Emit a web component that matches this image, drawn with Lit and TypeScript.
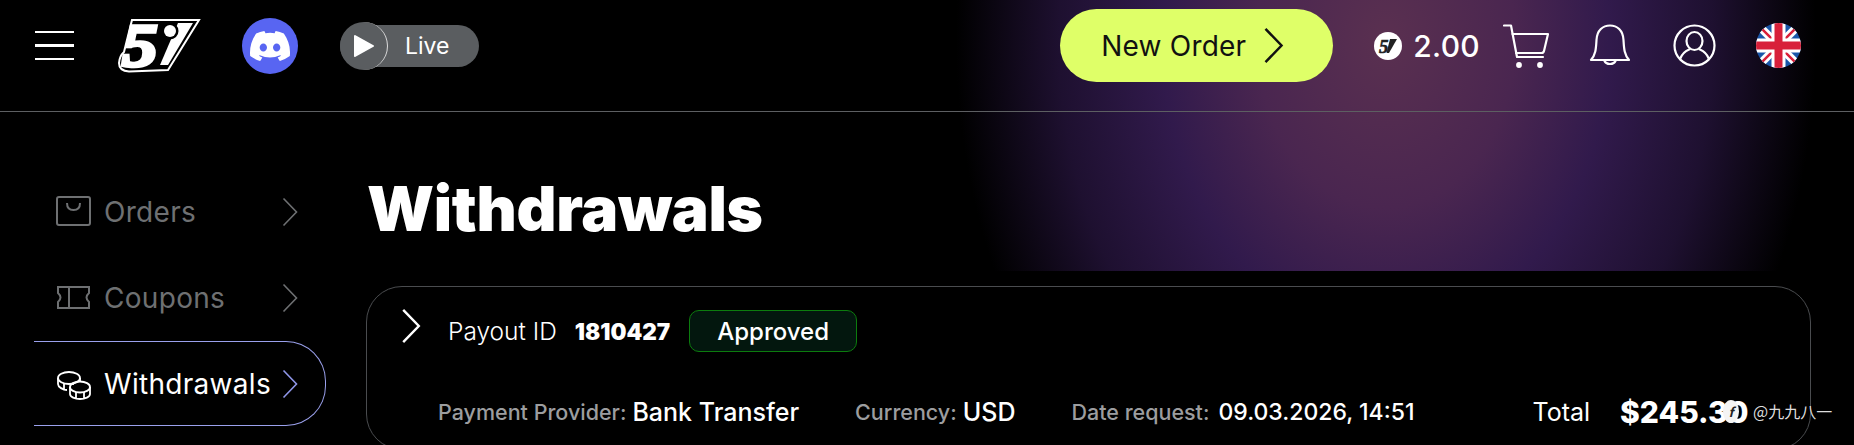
import { LitElement, html, css } from "lit";
import { customElement } from "lit/decorators.js";

const chevron = (cls: string) => html`<svg class=${cls} viewBox="0 0 16 30" fill="none" stroke="currentColor" stroke-width="2"><path d="M1.5 1.5 L14.5 15 L1.5 28.5"/></svg>`;

@customElement("app-root")
export class AppRoot extends LitElement {
  static styles = css`
    :host { display:block; position:relative; width:1854px; height:445px; overflow:hidden; background:#000; color:#fff; font-family:"Inter","Liberation Sans",sans-serif; }
    .glow { position:absolute; left:900px; top:0; width:954px; height:271px; background:radial-gradient(ellipse 430px 560px at 486px 40px,#5a3050 0%,#4a2650 30%,#311a4c 52%,#1e1030 76%,#000 100%); }
    .page { position:relative; display:flex; flex-direction:column; }
    header { height:112px; box-sizing:border-box; border-bottom:1px solid #5d5f62; display:flex; align-items:center; padding:0 53px 20px 35px; }
    .burger { width:39px; display:flex; flex-direction:column; gap:11px; margin-right:44px; }
    .burger i { display:block; height:2.500px; background:#fff; }
    .logo { width:82px; height:54px; margin-right:42px; overflow:visible; }
    .logo text, .coin text { font-family:"Liberation Serif",serif; font-weight:700; font-style:italic; }
    .discord { width:56px; height:56px; border-radius:50%; background:#5865f2; display:flex; align-items:center; justify-content:center; margin-right:42px; }
    .live { width:139px; height:42px; border-radius:21px; background:#5a5d60; position:relative; display:flex; align-items:center; box-sizing:border-box; padding-left:65px; font-size:23px; font-weight:400; color:#fff; }
    .play { position:absolute; left:0; top:-3px; width:48px; height:48px; box-sizing:border-box; border-radius:50%; background:#5a5d60; border-right:1.500px solid #ddd; display:flex; align-items:center; justify-content:center; }
    .spacer { flex:1; }
    .new { width:273px; height:73px; border-radius:37px; background:#dfff68; color:#111; display:flex; align-items:center; box-sizing:border-box; padding-left:41px; gap:17px; font-size:28px; margin-right:41px; letter-spacing:.2px; }
    .new svg { width:21px; height:37px; }
    .coin { width:28px; height:28px; margin-right:11px; overflow:visible; }
    .bal { font-size:30px; font-weight:500; margin-right:23px; letter-spacing:.3px; }
    .cart { width:46px; height:44px; margin-right:40px; }
    .bell { width:42px; height:44px; margin-right:42px; }
    .user { width:43px; height:43px; margin-right:40px; }
    .flag { width:45px; height:45px; }
    .main { display:flex; }
    aside { width:332px; flex:none; box-sizing:border-box; padding:57px 0 0 34px; display:flex; flex-direction:column; gap:1px; }
    .nav { width:292px; height:85px; box-sizing:border-box; display:flex; align-items:center; padding-left:22px; color:#6e7072; font-size:28px; letter-spacing:.3px; border:1px solid transparent; border-left:none; border-radius:0 40px 40px 0; }
    .nav .ic { width:36px; height:36px; margin-right:12px; flex:none; }
    .nav .lab { flex:1; }
    .nav .ch { width:16px; height:30px; margin-right:27px; stroke-width:1.600; }
    .nav.active { color:#fff; border-color:#9aa0ec; }
    .nav.active .ch { color:#8f96e8; }
    .content { flex:1; padding-right:43px; }
    h1 { margin:0; height:174px; box-sizing:border-box; padding:61px 0 0 35px; font-size:62px; line-height:72px; font-weight:900; letter-spacing:-.3px; }
    .card { height:164px; box-sizing:border-box; margin-left:34px; border:1px solid #4a4c4f; border-radius:36px; padding:23px 0 0 35px; }
    .r1 { display:flex; align-items:center; height:42px; font-size:24.500px; font-weight:300; }
    .r1 svg { width:20px; height:36px; margin:-11px 27px 0 -1px; }
    .r1 b { font-weight:900; margin:0 19px 0 18px; font-size:22.500px; }
    .badge { height:42px; width:168px; box-sizing:border-box; background:#03170e; border:1px solid #0c7c0e; border-radius:10px; display:flex; align-items:center; justify-content:center; font-weight:500; font-size:24px; }
    .r2 { display:flex; align-items:center; height:50px; margin-top:35px; padding-left:36px; font-size:25px; font-weight:500; }
    .r2 span { color:#9c9d9f; font-size:21.500px; margin-right:6px; }
    .r2 .v { margin-right:56px; }
    .date { font-size:23px; margin-left:3px; }
    .tot { font-weight:400; font-size:25px; margin-left:118px; margin-right:30px; }
    .amt { font-weight:800; font-size:30px; }
    .wm { position:absolute; left:1723px; top:399px; display:flex; align-items:center; gap:14px; font-size:16px; color:#ddd; font-family:"Noto Sans CJK SC","Inter",sans-serif; }
    .wm i { display:flex; width:16px; height:23px; border-radius:50%; background:#f4f4f4; color:#222; font-size:13px; align-items:center; justify-content:center; font-weight:700; }
  `;

  render() {
    return html`
      <div class="glow"></div>
      <div class="page">
        <header>
          <div class="burger"><i></i><i></i><i></i></div>
          <svg class="logo" viewBox="0 0 82 54">
            <path d="M14 1 L81 1 L50 51 L11 52.500 Q1 52 1 44 Q1.500 37 6 33 Z" fill="#000" stroke="#fff" stroke-width="2"/>
            <text transform="translate(4 47) scale(1.15 1)" font-size="62" fill="#fff" stroke="#fff" stroke-width="3.500">5</text>
            <path d="M60 4 L75 4 L50 46 L42 46 Z" fill="#fff"/>
            <circle cx="52" cy="12" r="8.500" fill="#000"/>
            <circle cx="52" cy="12" r="6" fill="#fff"/>
          </svg>
          <div class="discord">
            <svg width="40" height="30" viewBox="0 0 24 18" fill="#fff"><path d="M20.3 1.5A19.8 19.8 0 0 0 15.4 0c-.2.4-.5.9-.6 1.3a18.4 18.4 0 0 0-5.5 0C9.100.9 8.800.4 8.600 0a19.700 19.700 0 0 0-4.900 1.500C.5 6.100-.3 10.600.1 15a19.900 19.900 0 0 0 6 3c.5-.7.9-1.400 1.300-2.100-.7-.3-1.400-.6-2-1l.5-.4a14.200 14.200 0 0 0 12.200 0l.5.4c-.6.4-1.300.7-2 1 .4.7.8 1.400 1.300 2.100a19.900 19.900 0 0 0 6-3c.5-5.100-.8-9.500-3.600-13.500zM8 12.300c-1.200 0-2.200-1.100-2.200-2.400S6.800 7.500 8 7.500s2.200 1.100 2.200 2.400-1 2.400-2.200 2.400zm8 0c-1.200 0-2.200-1.100-2.200-2.400s1-2.400 2.200-2.400 2.200 1.100 2.200 2.400-1 2.400-2.200 2.400z"/></svg>
          </div>
          <div class="live">
            <div class="play"><svg width="22" height="24" viewBox="0 0 22 24"><path d="M2 2 L20 12 L2 22 Z" fill="#fff" stroke="#fff" stroke-width="2" stroke-linejoin="round"/></svg></div>
            Live
          </div>
          <div class="spacer"></div>
          <div class="new">New Order ${chevron("")}</div>
          <svg class="coin" viewBox="0 0 28 28"><circle cx="14" cy="14" r="14" fill="#fff"/><text x="5" y="21" font-size="19" fill="#222" stroke="#222" stroke-width=".6">5</text><path d="M16 7 L23 7 L15 21 L12.500 21 Z" fill="#222"/></svg>
          <div class="bal">2.00</div>
          <svg class="cart" viewBox="0 0 46 44" fill="none" stroke="#fff" stroke-width="2.200" stroke-linecap="round" stroke-linejoin="round"><path d="M1 1.500 H8 L14 33 H40"/><path d="M9.500 10 H45 L41 27 Q40.500 29 38.500 29 H13"/><circle cx="16" cy="41" r="1.800" fill="#fff"/><circle cx="37" cy="41" r="1.800" fill="#fff"/></svg>
          <svg class="bell" viewBox="0 0 42 44" fill="none" stroke="#fff" stroke-width="2.200" stroke-linejoin="round"><path d="M2 36 C7 30 7 24 7.500 16 C8 6 14 1.500 21 1.500 C28 1.500 34 6 34.500 16 C35 24 35 30 40 36 Z"/><path d="M15 36 A6.500 6.500 0 0 0 27 36"/></svg>
          <svg class="user" viewBox="0 0 43 43" fill="none" stroke="#fff" stroke-width="2.200"><circle cx="21.500" cy="21.500" r="20"/><ellipse cx="21.500" cy="17" rx="8" ry="9"/><path d="M7 35 C10 27 15 26 17 25 M36 35 C33 27 28 26 26 25"/></svg>
          <svg class="flag" viewBox="0 0 45 45">
            <defs><clipPath id="fc"><circle cx="22.500" cy="22.500" r="22.500"/></clipPath></defs>
            <g clip-path="url(#fc)">
              <rect width="45" height="45" fill="#1a56a8"/>
              <path d="M0 0 L45 45 M45 0 L0 45" stroke="#fff" stroke-width="8"/>
              <path d="M0 0 L45 45 M45 0 L0 45" stroke="#d8203a" stroke-width="2.500"/>
              <path d="M22.500 0 V45 M0 22.500 H45" stroke="#fff" stroke-width="14"/>
              <path d="M22.500 0 V45 M0 22.500 H45" stroke="#d8203a" stroke-width="8"/>
            </g>
          </svg>
        </header>
        <div class="main">
          <aside>
            <div class="nav">
              <svg class="ic" viewBox="0 0 36 36" fill="none" stroke="currentColor" stroke-width="2"><rect x="1" y="3" width="33" height="28" rx="2"/><path d="M11 9 Q11 16 17.500 16 Q24 16 24 9"/></svg>
              <div class="lab">Orders</div>${chevron("ch")}
            </div>
            <div class="nav">
              <svg class="ic" viewBox="0 0 36 36" fill="none" stroke="currentColor" stroke-width="2"><path d="M2 7 H33 V13 Q28 17.500 33 22 V28 H2 V22 Q7 17.500 2 13 Z"/><path d="M13 7 V28"/></svg>
              <div class="lab">Coupons</div>${chevron("ch")}
            </div>
            <div class="nav active">
              <svg class="ic" viewBox="0 0 36 36" fill="none" stroke="currentColor" stroke-width="1.800"><ellipse cx="13" cy="12" rx="11" ry="6"/><path d="M2 12 V18 C2 21 7 24 11 24 M24 12 V15 M8 17 V23 M17 17 V19"/><ellipse cx="24" cy="21" rx="10" ry="5.500"/><path d="M14 21 V28 C14 31 19 33 24 33 C29 33 34 31 34 28 V21 M20 26 V33 M28 26 V33"/></svg>
              <div class="lab">Withdrawals</div>${chevron("ch")}
            </div>
          </aside>
          <div class="content">
            <h1>Withdrawals</h1>
            <div class="card">
              <div class="r1">${chevron("")}Payout ID <b>1810427</b><div class="badge">Approved</div></div>
              <div class="r2">
                <span>Payment Provider:</span><div class="v">Bank Transfer</div>
                <span>Currency:</span><div class="v">USD</div>
                <span>Date request:</span><div class="date">09.03.2026, 14:51</div>
                <div class="tot">Total</div><div class="amt">$245.30</div>
              </div>
            </div>
          </div>
        </div>
      </div>
      <div class="wm"><i>f</i>@九九八一</div>
    `;
  }
}
